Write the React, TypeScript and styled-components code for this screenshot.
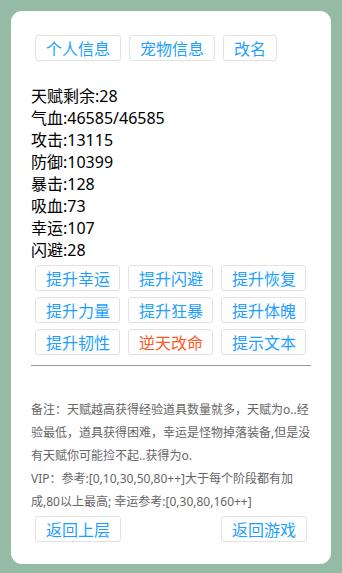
import React from 'react';
import styled, { createGlobalStyle } from 'styled-components';

const Global = createGlobalStyle`
  html, body {
    margin: 0;
    padding: 0;
    background: #95bba5;
  }
  body {
    font-family: "Noto Sans", "Noto Sans CJK SC", sans-serif;
  }
`;

const Page = styled.div`
  padding: 11px;
  min-height: 573px;
  box-sizing: border-box;
`;

const Card = styled.div`
  width: 320px;
  box-sizing: border-box;
  background: #fff;
  border-radius: 11px;
  padding: 24px 20px 22px;
`;

const Row = styled.div<{ $spread?: boolean }>`
  display: flex;
  gap: 8px;
  padding: 0 4px;
  justify-content: ${p => (p.$spread ? 'space-between' : 'flex-start')};
`;

const Grid = styled.div`
  display: grid;
  grid-template-columns: repeat(3, 85px);
  column-gap: 8px;
  row-gap: 6px;
  padding: 0 4px;
  margin-top: 4px;
`;

const Btn = styled.button<{ $danger?: boolean }>`
  height: 26px;
  min-width: 53px;
  box-sizing: border-box;
  padding: 0 10px;
  border: 1px solid #e2e2e2;
  border-radius: 3px;
  background: #fff;
  color: ${p => (p.$danger ? '#ff5722' : '#1e9fff')};
  font-family: "Noto Sans CJK SC", sans-serif;
  font-size: 16px;
  line-height: 24px;
  white-space: nowrap;
  cursor: pointer;
`;

const Stats = styled.div`
  margin-top: 24px;
  font-size: 16px;
  line-height: 22px;
  color: #000;
`;

const Divider = styled.hr`
  margin: 10px 0 0;
  border: none;
  border-top: 1px solid #999;
`;

const Note = styled.div`
  margin-top: 32px;
  font-size: 12px;
  line-height: 23px;
  color: #666;
  margin-bottom: 3px;
`;

const stats = [
  '天赋剩余:28',
  '气血:46585/46585',
  '攻击:13115',
  '防御:10399',
  '暴击:128',
  '吸血:73',
  '幸运:107',
  '闪避:28',
];

const actions = [
  '提升幸运', '提升闪避', '提升恢复',
  '提升力量', '提升狂暴', '提升体魄',
  '提升韧性', '逆天改命', '提示文本',
];

export default function App() {
  return (
    <Page>
      <Global />
      <Card>
        <Row>
          <Btn>个人信息</Btn>
          <Btn>宠物信息</Btn>
          <Btn>改名</Btn>
        </Row>
        <Stats>
          {stats.map(s => (
            <div key={s}>{s}</div>
          ))}
        </Stats>
        <Grid>
          {actions.map(a => (
            <Btn key={a} $danger={a === '逆天改命'}>{a}</Btn>
          ))}
        </Grid>
        <Divider />
        <Note>
          备注：天赋越高获得经验道具数量就多，天赋为o..经验最低，道具获得困难，幸运是怪物掉落装备,但是没有天赋你可能捡不起..获得为o.
          <br />
          VIP：参考:[0,10,30,50,80++]大于每个阶段都有加成,80以上最高; 幸运参考:[0,30,80,160++]
        </Note>
        <Row $spread>
          <Btn>返回上层</Btn>
          <Btn>返回游戏</Btn>
        </Row>
      </Card>
    </Page>
  );
}
